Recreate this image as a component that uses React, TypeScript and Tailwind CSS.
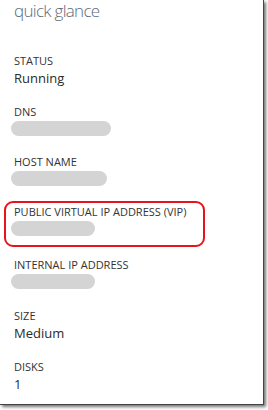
import React from "react";

type Field = {
  label: string;
  value?: string;
  pill?: number;
  highlight?: boolean;
  extra?: string;
};

const fields: Field[] = [
  { label: "STATUS", value: "Running" },
  { label: "DNS", pill: 100 },
  { label: "HOST NAME", pill: 96 },
  { label: "PUBLIC VIRTUAL IP ADDRESS (VIP)", pill: 84, highlight: true },
  { label: "INTERNAL IP ADDRESS", pill: 84, extra: "mt-[3px]" },
  { label: "SIZE", value: "Medium", extra: "mt-[1px]" },
  { label: "DISKS", value: "1" },
];

function FieldRow({ field }: { field: Field }) {
  return (
    <div className={`relative flex flex-col gap-[2px] ${field.extra ?? ""}`}>
      {/* Annotation box drawn over the VIP field */}
      {field.highlight && (
        <div className="absolute left-[-7px] top-[-4px] w-[201px] h-[46px] rounded-[9px] border-2 border-[#e8131b]" />
      )}
      <div className="pl-[3px] text-[11px] leading-[14px] text-[#333]">{field.label}</div>
      {field.value ? (
        <div className="pl-[3px] text-[13px] leading-[16px] text-[#2a2a2a]">{field.value}</div>
      ) : (
        <div className="h-[15px] rounded-full bg-[#d4d4d4]" style={{ width: field.pill }} />
      )}
    </div>
  );
}

export default function App() {
  return (
    <div className="w-[268px] h-[410px] bg-white overflow-hidden" style={{ fontFamily: '"Open Sans", "Noto Sans", sans-serif' }}>
      <div className="w-[264px] h-[405px] bg-white border-r border-b border-[#454545] shadow-[2px_2px_3px_rgba(0,0,0,0.55)] pl-[11px]">
        {/* Header */}
        <h1 className="pl-[3px] text-[17px] leading-[22px] font-light text-[#5b6b7b] tracking-[-0.7px]">
          quick glance
        </h1>

        {/* Properties */}
        <div className="mt-[32px] flex flex-col gap-[19px]">
          {fields.map((f) => (
            <FieldRow key={f.label} field={f} />
          ))}
        </div>
      </div>
    </div>
  );
}
